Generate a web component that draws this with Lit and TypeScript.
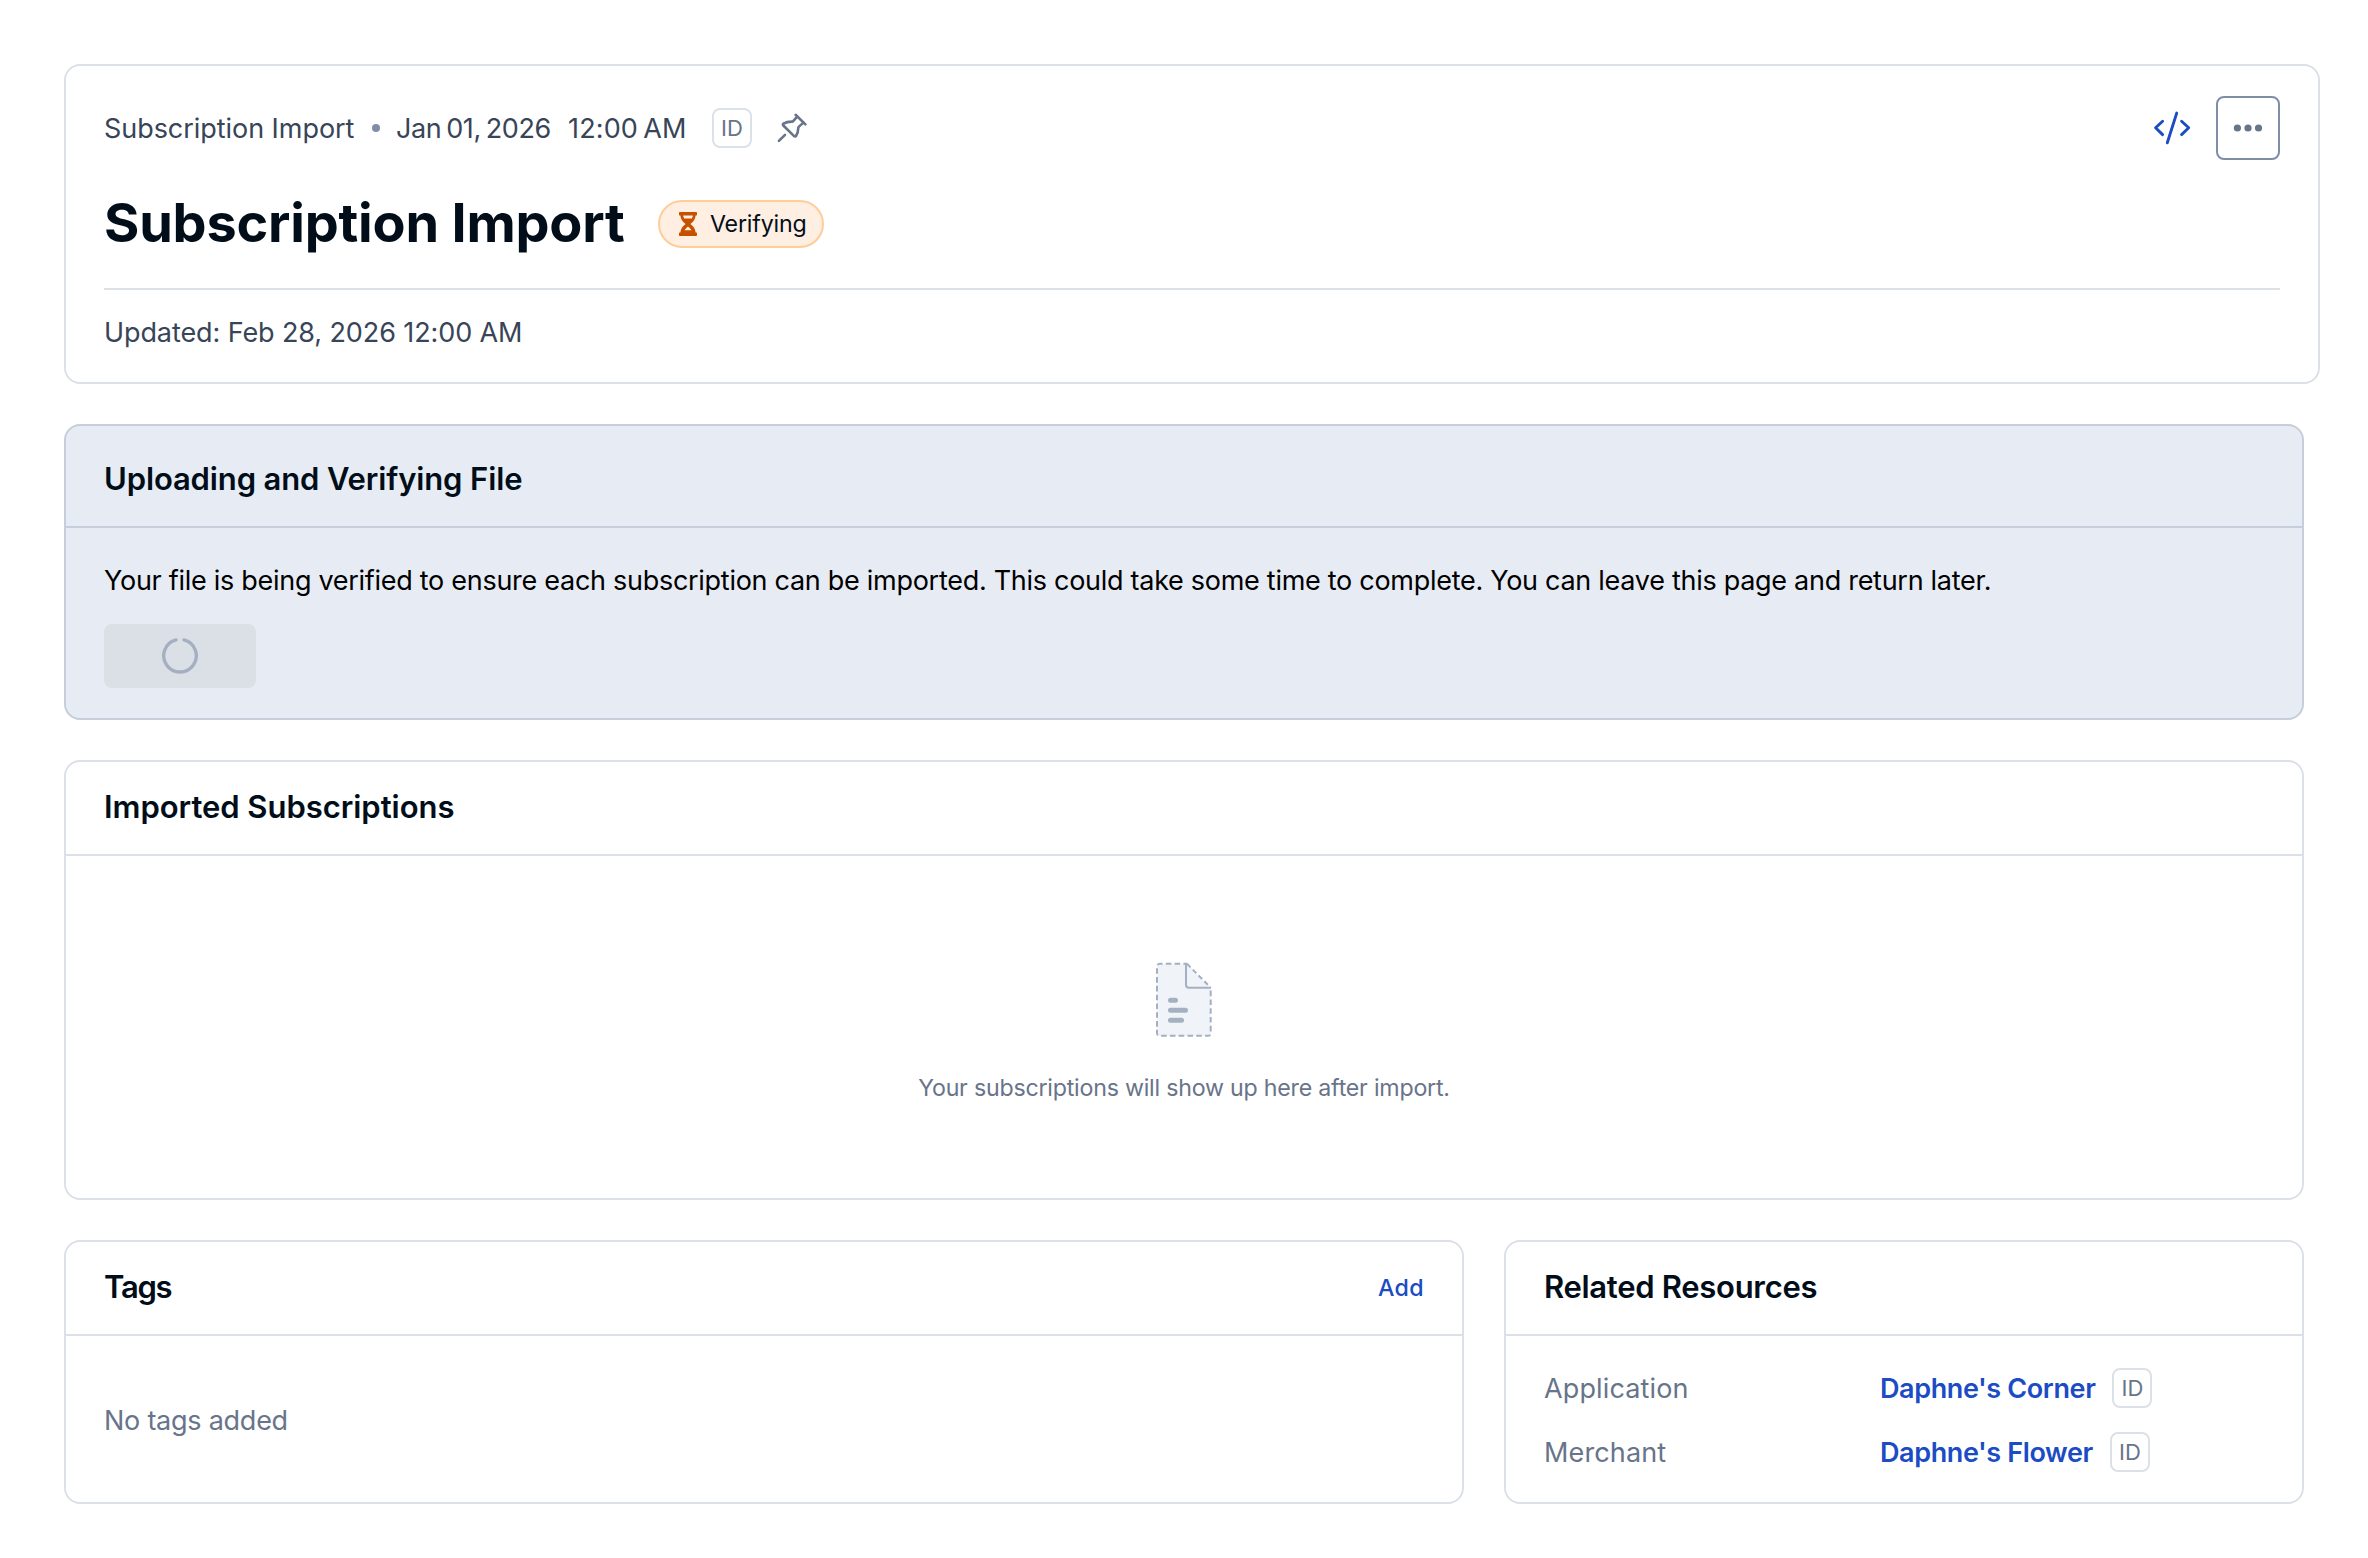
import { LitElement, html, css, svg } from "lit";
import { customElement, property } from "lit/decorators.js";

const pinIcon = html`<svg class="pin" width="32" height="32" viewBox="0 0 32 32" fill="none" stroke="#68748a" stroke-width="2.6" stroke-linecap="round" stroke-linejoin="round">
  <path d="M19.6 2.8L29.4 12.4" />
  <path d="M21.2 4.6L17.4 8.9C17 9.4 16.4 9.6 15.8 9.6C12.4 9.6 9.4 10.4 7.5 11.6C6.7 12.1 6.7 12.9 7.3 13.5L18.1 24.1C18.8 24.8 19.6 24.6 20.1 23.8C21.5 21.6 22.2 19.2 22.2 16.4C22.2 15.7 22.4 15.1 22.9 14.6L27.4 10.6" />
  <path d="M2.9 28.9L9 22.9" />
</svg>`;

const codeIcon = html`<svg width="40" height="40" viewBox="0 0 40 40" fill="none" stroke="#1b4cc4" stroke-width="2.9" stroke-linecap="round" stroke-linejoin="round">
  <path d="M10.6 13.2L3.6 19.8L10.6 26.6" />
  <path d="M24.7 5.1L15.3 34.8" />
  <path d="M29.6 13.2L36.7 19.8L29.6 26.6" />
</svg>`;

const moreIcon = html`<svg width="32" height="32" viewBox="0 0 32 32" fill="#68748a">
  ${[5.4, 16, 26.5].map((cx) => svg`<circle cx=${cx} cy="16" r="3.6" />`)}
</svg>`;

const hourglassIcon = html`<svg width="18" height="24" viewBox="0 0 18 24">
  <path fill="#c75000" fill-rule="evenodd" d="M1 0H17C17.6 0 18 .4 18 1V2.4C18 3 17.6 3.4 17 3.4H16.6C16.4 7 14.4 9.6 11.4 12C14.4 14.4 16.4 17 16.6 20.6H17C17.6 20.6 18 21 18 21.6V23C18 23.6 17.6 24 17 24H1C.4 24 0 23.6 0 23V21.6C0 21 .4 20.6 1 20.6H1.4C1.6 17 3.6 14.4 6.6 12C3.6 9.6 1.6 7 1.4 3.4H1C.4 3.4 0 3 0 2.4V1C0 .4.4 0 1 0ZM4.2 3.4C4.3 4.5 4.6 5.6 5.1 6.4H12.9C13.4 5.6 13.7 4.5 13.8 3.4ZM9 14.4C7.6 15.5 6.3 16.8 5.5 18.2H12.5C11.7 16.8 10.4 15.5 9 14.4Z" />
</svg>`;

const spinnerIcon = html`<svg width="40" height="40" viewBox="0 0 40 40" fill="none" stroke="#a4b0c2" stroke-width="3.4" stroke-linecap="round">
  <path d="M24 3.9A16.3 16.3 0 1 1 16 3.9" />
</svg>`;

const fileIcon = html`<svg width="56" height="76" viewBox="0 0 56 76" fill="none" stroke="#a4b0c2" stroke-width="2">
  <path fill="#f0f4f9" stroke="none" d="M4 2H31L54.7 25.7V71Q54.7 74 51.7 74H4Q1 74 1 71V5Q1 2 4 2Z" />
  <path stroke-dasharray="5.6 3.2" stroke-dashoffset="2" d="M31 1.8H4Q1 1.8 1 4.8V71Q1 73.8 4 73.8H51.7Q54.7 73.8 54.7 71V26" />
  <path stroke-dasharray="5 3.2" d="M31 1.8L54.7 25.6" />
  <path stroke-linejoin="round" d="M30 1.8V22.8Q30 25.8 33 25.8H55" />
  <path stroke-width="5" stroke-linecap="round" d="M14.5 38.2H19.5M14.5 48.2H29.5M14.5 58.2H25.5" />
</svg>`;

@customElement("id-chip")
export class IdChip extends LitElement {
  static styles = css`
    :host { display: block; flex: none; }
    .chip {
      box-sizing: border-box; width: 40px; height: 40px;
      display: flex; align-items: center; justify-content: center;
      border: 2px solid #dce1e8; border-radius: 8px; background: #fff;
      color: #68748a; font: 400 22px/22px Inter, "Liberation Sans", sans-serif; letter-spacing: 0;
    }
  `;
  render() {
    return html`<div class="chip">ID</div>`;
  }
}

@customElement("panel-card")
export class PanelCard extends LitElement {
  @property() heading = "";
  @property({ reflect: true }) tone = "plain";
  static styles = css`
    :host { display: block; box-sizing: border-box; border: 2px solid #dce1e8; border-radius: 16px; background: #fff; overflow: hidden; }
    :host([tone="info"]) { background: #e7ecf4; border-color: #c6cedb; }
    .head {
      box-sizing: border-box; height: 94px; padding: 0 38px;
      display: flex; align-items: center; justify-content: space-between;
      border-bottom: 2px solid #dce1e8;
    }
    :host([tone="info"]) .head { height: 102px; padding-top: 8px; border-color: #c6cedb; }
    .title { margin: 0; padding-bottom: 2px; font-size: 31px; font-weight: 600; line-height: 40px; letter-spacing: var(--heading-spacing, -0.04px); color: #010e1a; white-space: nowrap; }
  `;
  render() {
    return html`<div class="head"><h2 class="title">${this.heading}</h2><slot name="action"></slot></div><slot></slot>`;
  }
}

const related = [
  { label: "Application", name: "Daphne's Corner" },
  { label: "Merchant", name: "Daphne's Flower" },
];

@customElement("app-root")
export class AppRoot extends LitElement {
  static styles = css`
    :host {
      display: block; box-sizing: border-box; height: 1558px; padding: 64px 48px 0 64px; background: #fff;
      font-family: Inter, "Liberation Sans", sans-serif; font-size: 27px; line-height: 40px; color: #384457;
    }
    svg { display: block; flex: none; }
    .header { box-sizing: border-box; height: 320px; padding: 30px 38px 0; border: 2px solid #dce1e8; border-radius: 16px; }
    .meta { display: flex; align-items: center; height: 64px; white-space: nowrap; }
    .kind, .date, .time { padding-top: 2px; }
    .kind { width: 268px; letter-spacing: -0.05px; }
    .dot { width: 8px; height: 8px; margin-right: 16px; border-radius: 50%; background: #7e8ea5; }
    .date { width: 172px; letter-spacing: -0.4px; word-spacing: -2.3px; }
    .time { width: 144px; letter-spacing: 0.15px; word-spacing: -2.6px; }
    .pin { margin-left: 24px; }
    .actions { display: flex; align-items: center; gap: 24px; margin-left: auto; }
    .more {
      box-sizing: border-box; width: 64px; height: 64px; padding: 0; display: flex; align-items: center; justify-content: center;
      border: 2px solid #7e8ea5; border-radius: 8px; background: #fff;
    }
    .name { display: flex; align-items: center; height: 128px; border-bottom: 2px solid #dce1e8; }
    .title { margin: 0; width: 554px; padding-bottom: 2px; font-size: 54px; line-height: 64px; font-weight: 700; letter-spacing: -0.2px; color: #010e1a; white-space: nowrap; }
    .badge {
      box-sizing: border-box; width: 166px; height: 48px; padding-left: 19px; display: flex; align-items: center; gap: 13px;
      border: 2px solid #ffcd96; border-radius: 24px; background: #ffeee2; color: #010e1a; font-size: 23.2px; letter-spacing: -0.2px;
    }
    .updated { padding-top: 23px; letter-spacing: -0.1px; white-space: nowrap; }
    .stack { display: flex; flex-direction: column; gap: 40px; margin: 40px 16px 0 0; }
    .verify { height: 296px; --heading-spacing: -0.13px; }
    .verify-body { padding: 33px 38px 0; display: flex; flex-direction: column; align-items: flex-start; gap: 23px; }
    .message { margin: 0; color: #000; letter-spacing: -0.284px; white-space: nowrap; }
    .loading { width: 152px; height: 64px; padding: 0; border: 0; border-radius: 8px; background: #dbdfe6; display: flex; align-items: center; justify-content: center; }
    .imports { height: 440px; }
    .empty { padding-top: 106px; display: flex; flex-direction: column; align-items: center; gap: 34px; font-size: 23.2px; line-height: 32px; letter-spacing: -0.22px; color: #68748a; }
    .pair { display: grid; grid-template-columns: 1400px 800px; gap: 40px; height: 264px; }
    .tags { --heading-spacing: -1.3px; }
    .related { --heading-spacing: -0.3px; }
    .add { font-size: 23.2px; font-weight: 500; letter-spacing: 0.35px; color: #1b4cc4; }
    .none { padding: 65px 38px 0; letter-spacing: -0.25px; color: #68748a; }
    .rows { padding: 32px 38px 0; display: grid; grid-auto-rows: 40px; gap: 24px; }
    .row { display: grid; grid-template-columns: 336px 1fr; grid-template-rows: 40px; color: #68748a; letter-spacing: 0.13px; }
    .label, .link { padding-top: 2px; line-height: 38px; }
    .value { display: flex; align-items: center; gap: 17px; height: 40px; }
    .link { color: #1b4cc4; font-weight: 600; letter-spacing: -0.38px; white-space: nowrap; }
  `;
  render() {
    return html`
      <header class="header">
        <div class="meta">
          <span class="kind">Subscription Import</span><span class="dot"></span>
          <span class="date">Jan 01, 2026</span><span class="time">12:00 AM</span>
          <id-chip></id-chip>${pinIcon}
          <div class="actions">${codeIcon}<button class="more" aria-label="More">${moreIcon}</button></div>
        </div>
        <div class="name">
          <h1 class="title">Subscription Import</h1>
          <div class="badge">${hourglassIcon}<span>Verifying</span></div>
        </div>
        <div class="updated">Updated: Feb 28, 2026 12:00 AM</div>
      </header>
      <main class="stack">
        <panel-card class="verify" tone="info" heading="Uploading and Verifying File">
          <div class="verify-body">
            <p class="message">Your file is being verified to ensure each subscription can be imported. This could take some time to complete. You can leave this page and return later.</p>
            <button class="loading" disabled>${spinnerIcon}</button>
          </div>
        </panel-card>
        <panel-card class="imports" heading="Imported Subscriptions">
          <div class="empty">${fileIcon}<span>Your subscriptions will show up here after import.</span></div>
        </panel-card>
        <div class="pair">
          <panel-card class="tags" heading="Tags">
            <span class="add" slot="action">Add</span>
            <div class="none">No tags added</div>
          </panel-card>
          <panel-card class="related" heading="Related Resources">
            <div class="rows">
              ${related.map((r) => html`<div class="row"><span class="label">${r.label}</span><span class="value"><span class="link">${r.name}</span><id-chip></id-chip></span></div>`)}
            </div>
          </panel-card>
        </div>
      </main>
    `;
  }
}
